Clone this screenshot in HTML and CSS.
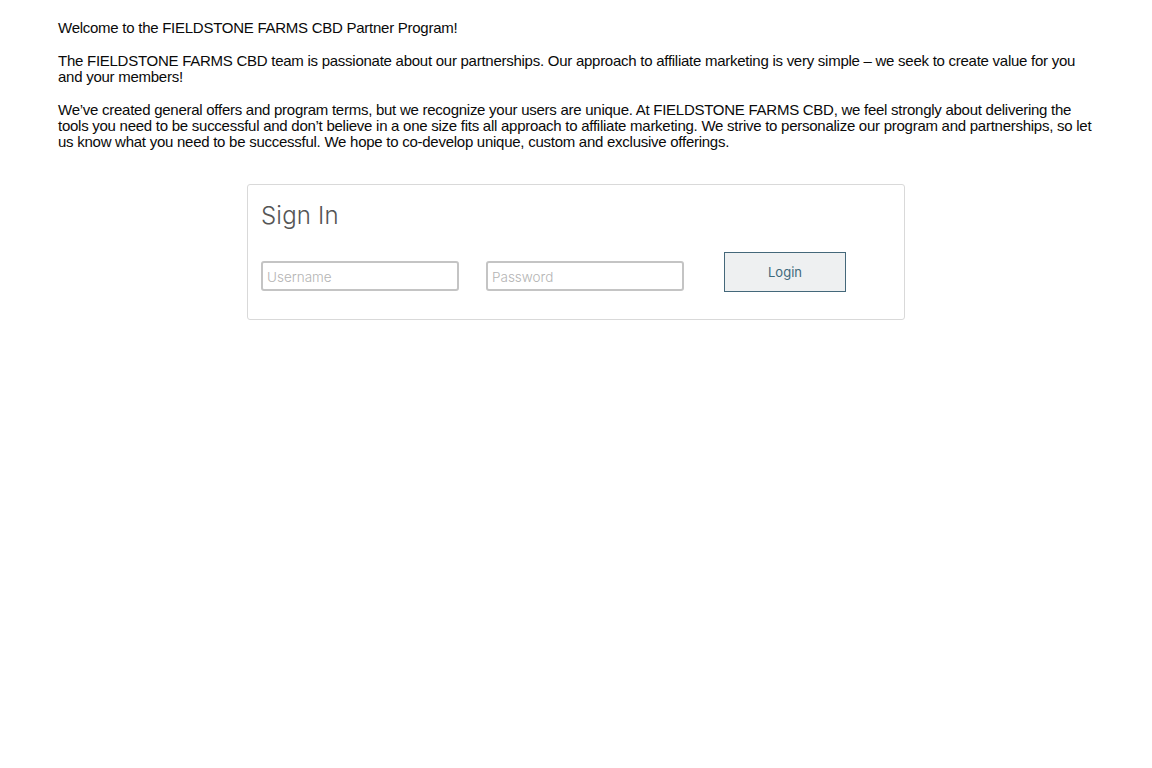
FILE: index.html
```html
<!DOCTYPE html>
<html lang="en">
<head>
<meta charset="utf-8">
<title>FIELDSTONE FARMS CBD Partner Program</title>
<link rel="stylesheet" href="styles.css">
</head>
<body>
<main class="page">
  <section class="intro">
    <p>Welcome to the FIELDSTONE FARMS CBD Partner Program!</p>
    <p>The FIELDSTONE FARMS CBD team is passionate about our partnerships. Our approach to affiliate marketing is very simple – we seek to create value for you and your members!</p>
    <p>We’ve created general offers and program terms, but we recognize your users are unique. At FIELDSTONE FARMS CBD, we feel strongly about delivering the tools you need to be successful and don’t believe in a one size fits all approach to affiliate marketing. We strive to personalize our program and partnerships, so let us know what you need to be successful. We hope to co-develop unique, custom and exclusive offerings.</p>
  </section>
  <section class="card">
    <h2 class="card-title">Sign In</h2>
    <form class="login-row">
      <input class="field" type="text" placeholder="Username">
      <input class="field" type="password" placeholder="Password">
      <button class="btn" type="button">Login</button>
    </form>
  </section>
</main>
</body>
</html>
```

FILE: styles.css
```css
html, body {
  margin: 0;
  padding: 0;
  background: #ffffff;
}

.page {
  padding: 20px 58px 0 58px;
}

.intro {
  font-family: "Liberation Sans", Arial, sans-serif;
  font-size: 15px;
  letter-spacing: -0.26px;
  line-height: 16px;
  color: #0a0a0a;
}

.intro p {
  margin: 0 0 17px 0;
}

.card {
  width: 658px;
  box-sizing: border-box;
  margin: 34px auto 0 auto;
  border: 1px solid #d9d9d9;
  border-radius: 3px;
  padding: 16px 14px 27px 13px;
}

.card-title {
  margin: 0;
  font-family: Inter, "Open Sans", sans-serif;
  font-weight: 300;
  font-size: 24px;
  line-height: 30px;
  color: #555;
  letter-spacing: 0.2px;
}

.login-row {
  display: flex;
  align-items: flex-end;
  margin-top: 21px;
}

.field {
  width: 198px;
  height: 30px;
  box-sizing: border-box;
  border: 2px solid #c4c4c4;
  border-radius: 3px;
  padding: 2px 4px 0 4px;
  font-family: Inter, "Open Sans", sans-serif;
  font-size: 13.5px;
  color: #444;
  margin: 0 27px 1px 0;
  outline: none;
}

.field::placeholder {
  color: #b4b4b4;
  font-weight: 300;
}

.field + .field {
  margin-right: 40px;
}

.btn {
  width: 122px;
  height: 40px;
  box-sizing: border-box;
  background: #eef0f1;
  border: 1px solid #44687a;
  border-radius: 0;
  font-family: Inter, "Open Sans", sans-serif;
  font-size: 13px;
  color: #3e6a7c;
  padding: 0;
}
```
